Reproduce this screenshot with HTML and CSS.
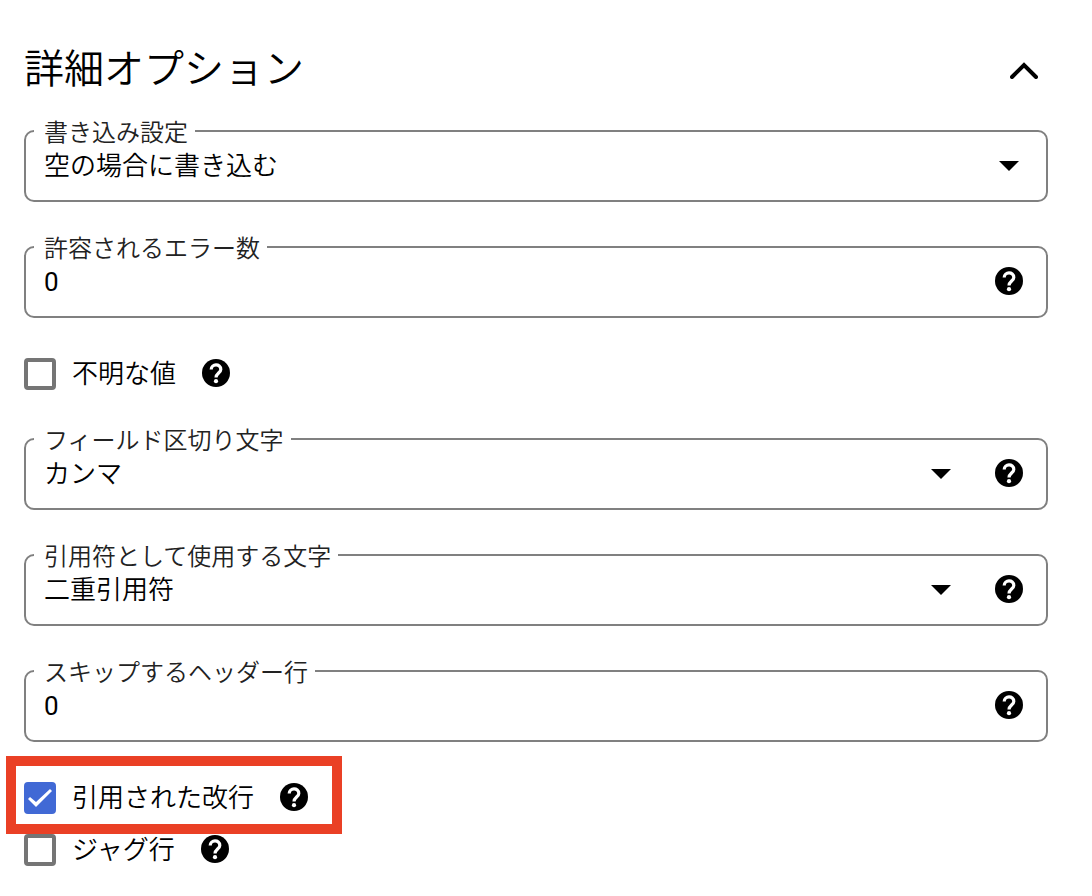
FILE: index.html
```
<!DOCTYPE html>
<html lang="ja">
<head>
    <meta charset="UTF-8">
    <meta name="viewport" content="width=device-width, initial-scale=1.0">
    <title>詳細オプション</title>
    <link rel="stylesheet" href="styles.css">
</head>
<body>

<!-- shared icons -->
<svg class="sprite" aria-hidden="true">
    <symbol id="icon-help" viewBox="0 0 28 28">
        <circle cx="14" cy="13" r="14" fill="#000"/>
        <path d="M9.2 9.6C9.2 3.4 18.8 3.4 18.8 9.4C18.8 12.8 14 13.4 14 17.6" fill="none" stroke="#fff" stroke-width="3.2"/>
        <circle cx="14" cy="21.2" r="2.1" fill="#fff"/>
    </symbol>
    <symbol id="icon-arrow" viewBox="0 0 28 28">
        <path d="M4 9h20L14 19z"/>
    </symbol>
</svg>

<main class="options">
    <div class="options-header">
        <h2>詳細オプション</h2>
        <button type="button" class="icon-button" aria-label="折りたたむ">
            <svg class="chevron" viewBox="0 0 28 18"><path d="M2 16L14 4l12 12" fill="none" stroke="#000" stroke-width="4" stroke-linecap="round"/></svg>
        </button>
    </div>

    <form>
        <div class="field">
            <label for="writeMode">書き込み設定</label>
            <div class="select">
                <select id="writeMode">
                    <option>空の場合に書き込む</option>
                </select>
                <svg class="icon"><use href="#icon-arrow"/></svg>
            </div>
        </div>

        <div class="field">
            <label for="maxErrors">許容されるエラー数</label>
            <input type="text" id="maxErrors" value="0">
            <button type="button" class="icon-button" aria-label="ヘルプ"><svg class="icon"><use href="#icon-help"/></svg></button>
        </div>

        <div class="check-row">
            <input type="checkbox" id="unknownValues">
            <label for="unknownValues">不明な値</label>
            <button type="button" class="icon-button" aria-label="ヘルプ"><svg class="icon"><use href="#icon-help"/></svg></button>
        </div>

        <div class="field">
            <label for="delimiter">フィールド区切り文字</label>
            <div class="select">
                <select id="delimiter">
                    <option>カンマ</option>
                </select>
                <svg class="icon"><use href="#icon-arrow"/></svg>
            </div>
            <button type="button" class="icon-button" aria-label="ヘルプ"><svg class="icon"><use href="#icon-help"/></svg></button>
        </div>

        <div class="field">
            <label for="quoteChar">引用符として使用する文字</label>
            <div class="select">
                <select id="quoteChar">
                    <option>二重引用符</option>
                </select>
                <svg class="icon"><use href="#icon-arrow"/></svg>
            </div>
            <button type="button" class="icon-button" aria-label="ヘルプ"><svg class="icon"><use href="#icon-help"/></svg></button>
        </div>

        <div class="field">
            <label for="skipRows">スキップするヘッダー行</label>
            <input type="text" id="skipRows" value="0">
            <button type="button" class="icon-button" aria-label="ヘルプ"><svg class="icon"><use href="#icon-help"/></svg></button>
        </div>

        <div class="check-row highlight">
            <input type="checkbox" id="quotedNewlines" checked>
            <label for="quotedNewlines">引用された改行</label>
            <button type="button" class="icon-button" aria-label="ヘルプ"><svg class="icon"><use href="#icon-help"/></svg></button>
        </div>

        <div class="check-row last">
            <input type="checkbox" id="jaggedRows">
            <label for="jaggedRows">ジャグ行</label>
            <button type="button" class="icon-button" aria-label="ヘルプ"><svg class="icon"><use href="#icon-help"/></svg></button>
        </div>
    </form>
</main>

</body>
</html>
```
FILE: styles.css
```
* {
    box-sizing: border-box;
}

body {
    margin: 0;
    background-color: #fff;
    color: #000;
    font-family: Roboto, "Noto Sans CJK JP", sans-serif;
    font-size: 26px;
    font-weight: 350;
}

.sprite {
    display: none;
}

.options {
    padding: 40px 44px 24px 24px;
}

.options-header {
    display: flex;
    align-items: center;
    justify-content: space-between;
    height: 60px;
    margin-bottom: 30px;
    padding-right: 10px;
}

h2 {
    margin: 0;
    font-size: 40px;
    font-weight: 350;
    line-height: 60px;
}

.icon-button {
    display: flex;
    padding: 0;
    border: none;
    background: none;
    cursor: pointer;
}

.chevron {
    width: 28px;
    height: 18px;
}

.icon {
    display: block;
    width: 28px;
    height: 28px;
    overflow: visible;
}

symbol {
    overflow: visible;
}

/* outlined fields, label sits on the top border */
.field {
    position: relative;
    display: flex;
    align-items: center;
    gap: 40px;
    height: 72px;
    margin-bottom: 44px;
    padding: 0 23px 0 18px;
    border: 2px solid #808080;
    border-radius: 10px;
}

.field label {
    position: absolute;
    top: -15px;
    left: 8px;
    padding: 0 7px 0 10px;
    background-color: #fff;
    color: #222;
    font-size: 24px;
    line-height: 32px;
}

.field input,
.field select {
    flex: 1;
    min-width: 0;
    height: 40px;
    margin: 0;
    padding: 0;
    border: none;
    outline: none;
    background: none;
    color: #000;
    font: inherit;
    appearance: none;
}

.field input {
    font-weight: 400;
}

.select {
    flex: 1;
    display: grid;
    align-items: center;
}

.select select,
.select .icon {
    grid-area: 1 / 1;
}

.select .icon {
    justify-self: end;
    pointer-events: none;
}

.check-row {
    display: flex;
    align-items: center;
    width: fit-content;
    margin: -4px 0 48px;
}

.check-row label {
    margin: 0 26px 0 16px;
    line-height: 32px;
}

.check-row input {
    display: grid;
    place-items: center;
    width: 32px;
    height: 32px;
    margin: 0;
    border: 4px solid #757575;
    border-radius: 4px;
    appearance: none;
}

.check-row input:checked {
    border-color: #4169d5;
    background-color: #4169d5;
}

.check-row input:checked::before {
    content: "";
    width: 24px;
    height: 20px;
    background-color: #fff;
    clip-path: polygon(0 11px, 2px 9px, 8px 14px, 22px 1px, 24px 3px, 8px 19px);
}

.highlight {
    margin: -30px 0 0 -18px;
    padding: 16px 24px 10px 8px;
    border: 10px solid #ea4025;
}

.last {
    margin: 0;
}
```
